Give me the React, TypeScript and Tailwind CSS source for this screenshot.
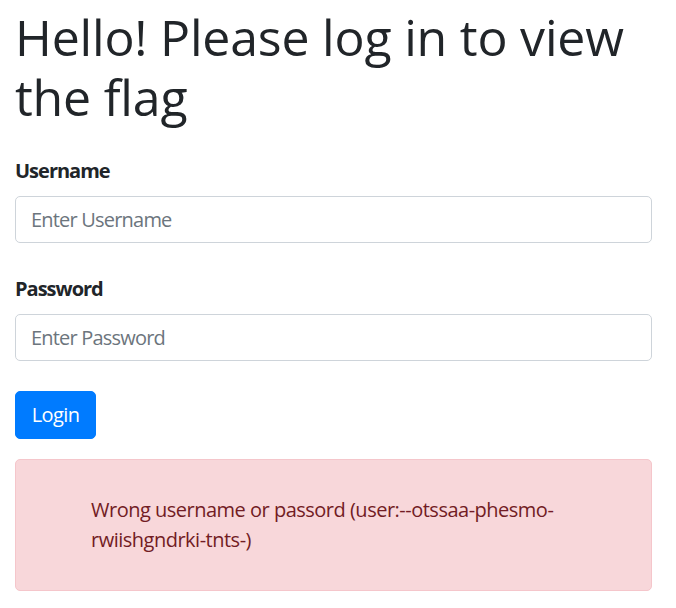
export default function App() {
  return (
    <div className="min-h-screen bg-white px-[15px] pt-[7px] text-[#212529] font-['Open_Sans','Noto_Sans',sans-serif]">
      <div className="w-[637px]">
        <h1 className="text-[50px] leading-[60px] font-normal tracking-[-0.2px] mb-[10px]">
          Hello! Please log in to view the flag
        </h1>

        <form className="pt-[19px]" onSubmit={(e) => e.preventDefault()}>
          <div className="mb-[31px]">
            <label className="block text-[20px] leading-[30px] font-bold tracking-[-1px] mb-[10px]">Username</label>
            <input
              type="text"
              placeholder="Enter Username"
              className="block w-full h-[47px] px-[15px] text-[20px] tracking-[-0.8px] border border-[#ced4da] rounded-[5px] placeholder:text-[#6c757d] outline-none"
            />
          </div>

          <div className="mb-[30px]">
            <label className="block text-[20px] leading-[30px] font-bold tracking-[-1px] mb-[10px]">Password</label>
            <input
              type="password"
              placeholder="Enter Password"
              className="block w-full h-[47px] px-[15px] text-[20px] tracking-[-0.8px] border border-[#ced4da] rounded-[5px] placeholder:text-[#6c757d] outline-none"
            />
          </div>

          <button
            type="submit"
            className="w-[81px] h-[48px] text-[20px] tracking-[-0.6px] text-white bg-[#007bff] rounded-[5px] border border-[#007bff]"
          >
            Login
          </button>
        </form>

        {/* Error alert */}
        <div className="mt-[20px] px-[25px] py-[15px] bg-[#f8d7da] border border-[#f5c6cb] rounded-[5px] text-[#721c24]">
          <div className="my-[20px] pl-[50px] text-[20px] leading-[30px] tracking-[-0.5px]">
            Wrong username or passord (user:--otssaa-phesmo-rwiishgndrki-tnts-)
          </div>
        </div>
      </div>
    </div>
  );
}
